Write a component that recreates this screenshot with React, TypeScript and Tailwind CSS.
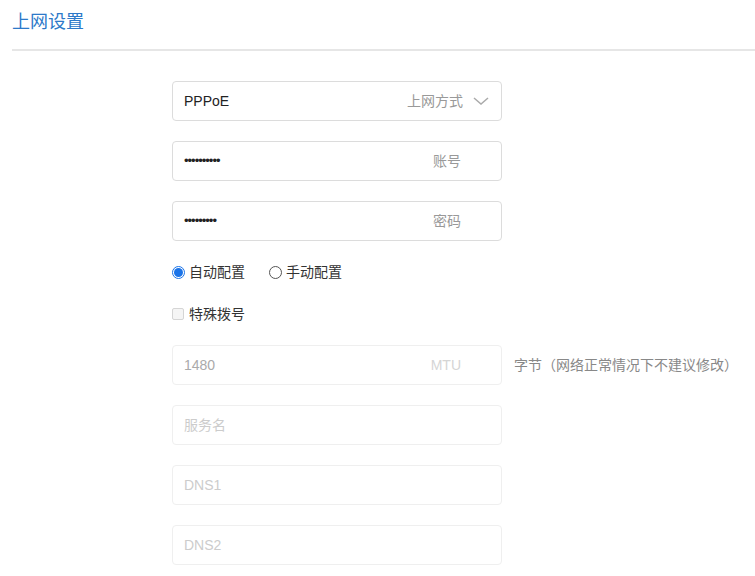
export default function App() {
  const f = { fontFamily: '"Liberation Sans", "Noto Sans CJK SC", sans-serif' };
  const box = "w-[330px] h-[40px] rounded-[4px] flex items-center px-[11px] text-[14px]";
  return (
    <div style={f} className="w-[755px] h-[576px] bg-white overflow-hidden">
      <div className="ml-[12px] h-[51px] border-b-2 border-[#e6e6e6] pt-[9px] text-[18px] text-[#2c79c9]">上网设置</div>
      <div className="ml-[172px] mt-[30px] flex flex-col">
        <div className={box + " border border-[#dcdcdc] text-[#222] justify-between"}>
          <span>PPPoE</span>
          <span className="flex items-center text-[#999]">上网方式
            <svg width="18" height="18" viewBox="0 0 18 18" className="ml-[9px]"><path d="M2 6l7 6 7-6" fill="none" stroke="#aaa" strokeWidth="1.5"/></svg>
          </span>
        </div>
        <div className={box + " mt-[20px] border border-[#dcdcdc] text-[#222] justify-between"}>
          <span className="tracking-[-1px] text-[13px]">••••••••••</span><span className="text-[#999] mr-[29px]">账号</span>
        </div>
        <div className={box + " mt-[20px] border border-[#dcdcdc] text-[#222] justify-between"}>
          <span className="tracking-[-1px] text-[13px]">•••••••••</span><span className="text-[#999] mr-[29px]">密码</span>
        </div>
        <div className="mt-[21px] flex items-center text-[14px] text-[#333] h-[20px]">
          <span className="w-[13px] h-[13px] rounded-full border border-[#1a73e8] flex items-center justify-center"><span className="w-[9px] h-[9px] rounded-full bg-[#1a73e8]"></span></span>
          <span className="ml-[4px]">自动配置</span>
          <span className="ml-[24px] w-[13px] h-[13px] rounded-full border border-[#555]"></span>
          <span className="ml-[4px]">手动配置</span>
        </div>
        <div className="mt-[22px] flex items-center text-[14px] text-[#333] h-[20px]">
          <span className="w-[12px] h-[12px] rounded-[2px] border border-[#d5d5d5] bg-[#f5f5f5]"></span>
          <span className="ml-[5px]">特殊拨号</span>
        </div>
        <div className="mt-[21px] flex items-center">
          <div className={box + " border border-[#efefef] text-[#aaa] justify-between"}>
            <span>1480</span><span className="text-[#d5d5d5] mr-[29px]">MTU</span>
          </div>
          <span className="ml-[12px] text-[14px] text-[#888]">字节（网络正常情况下不建议修改）</span>
        </div>
        {["服务名", "DNS1", "DNS2"].map(t => (
          <div key={t} className={box + " mt-[20px] border border-[#efefef] text-[#ccc]"}>{t}</div>
        ))}
      </div>
    </div>
  );
}
